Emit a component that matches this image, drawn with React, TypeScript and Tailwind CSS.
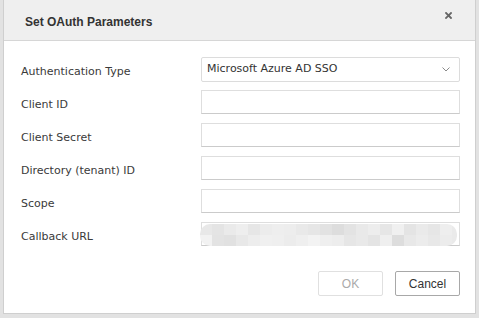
import React from "react";

const top = ["#e8e8e8","#e4e4e4","#eaeaea","#eeeeee","#e6e6e6","#ececec","#eeeeee","#ededed","#e9e9e9","#e6e6e6","#e2e2e2","#dddddd","#e3e3e3","#e9e9e9","#ededed","#e6e6e6","#f0f0f0","#e4e4e4","#eaeaea","#e6e6e6","#eeeeee","#eaeaea"];
const bot = ["#f2f2f2","#e3e3e3","#e1e1e1","#e8e8e8","#ededed","#f0f0f0","#efefef","#ececec","#efefef","#f3f3f3","#efefef","#ededed","#e6e6e6","#e9e9e9","#e4e4e4","#efefef","#dddddd","#e8e8e8","#ececec","#e8e8e8","#ececec","#eaeaea"];

const labels = ["Client ID", "Client Secret", "Directory (tenant) ID", "Scope"];
const dv = { fontFamily: '"DejaVu Sans", Verdana, sans-serif' };

function Row({ label, children }: { label: string; children: React.ReactNode }) {
  return (
    <div className="flex h-[33px] items-start">
      <div className="w-[180px] shrink-0 pt-[8px] text-[11px] leading-[14px] text-[#3a3a3a]" style={dv}>{label}</div>
      <div className="w-[259px]">{children}</div>
    </div>
  );
}

export default function App() {
  return (
    <div
      className="w-[479px] h-[318px] bg-[#e2e2e2] pl-[3px] pr-[3px] pb-[4px]"
      style={{ fontFamily: '"Liberation Sans", Arial, sans-serif' }}
    >
      <div className="flex h-full flex-col border border-t-0 border-[#cfcfcf] bg-white">
        <div className="relative flex h-[41px] shrink-0 items-center border-b border-[#d6d6d6] bg-[#efefef] pl-[21px] pt-[3px]">
          <span className="text-[12px] font-bold text-[#333]">Set OAuth Parameters</span>
          <svg className="absolute right-[23px] top-[12px]" width="7" height="7" viewBox="0 0 7 7">
            <path d="M1 1 L6 6 M6 1 L1 6" stroke="#666" strokeWidth="1.8" strokeLinecap="square" />
          </svg>
        </div>
        <div className="flex flex-1 flex-col pl-[17px] pt-[16px]">
          <Row label="Authentication Type">
            <div className="flex h-[25px] items-center justify-between rounded-[2px] border border-[#dcdcdc] pl-[5px] pr-[9px] text-[11px] text-[#333]" style={dv}>
              <span>Microsoft Azure AD SSO</span>
              <svg width="8" height="5" viewBox="0 0 8 5">
                <path d="M0.5 0.5 L4 4 L7.5 0.5" fill="none" stroke="#8a8a8a" strokeWidth="1" />
              </svg>
            </div>
          </Row>
          {labels.map((l) => (
            <Row key={l} label={l}>
              <div className="h-[24px] border border-[#dedede] border-b-[#cbcbcb]" />
            </Row>
          ))}
          <Row label="Callback URL">
            <div className="relative h-[24px] border border-[#dedede] border-b-[#cbcbcb]">
              <div className="absolute left-[-2px] right-[2px] top-[1px] bottom-[-1px] flex flex-col overflow-hidden rounded-[10px]">
                <div className="flex h-[11px]">
                  {top.map((c, i) => (
                    <div key={i} className="h-full w-[12px] shrink-0" style={{ background: c }} />
                  ))}
                </div>
                <div className="flex flex-1">
                  {bot.map((c, i) => (
                    <div key={i} className="h-full w-[12px] shrink-0" style={{ background: c }} />
                  ))}
                </div>
              </div>
            </div>
          </Row>
          <div className="mt-[16px] flex w-[439px] justify-end gap-[12px]">
            <button className="h-[25px] w-[65px] rounded-[2px] border border-[#e0e0e0] bg-white text-[12px] text-[#aaaaaa]">OK</button>
            <button className="h-[25px] w-[65px] rounded-[2px] border border-[#a8a8a8] bg-white text-[12px] text-[#333]">Cancel</button>
          </div>
        </div>
      </div>
    </div>
  );
}
